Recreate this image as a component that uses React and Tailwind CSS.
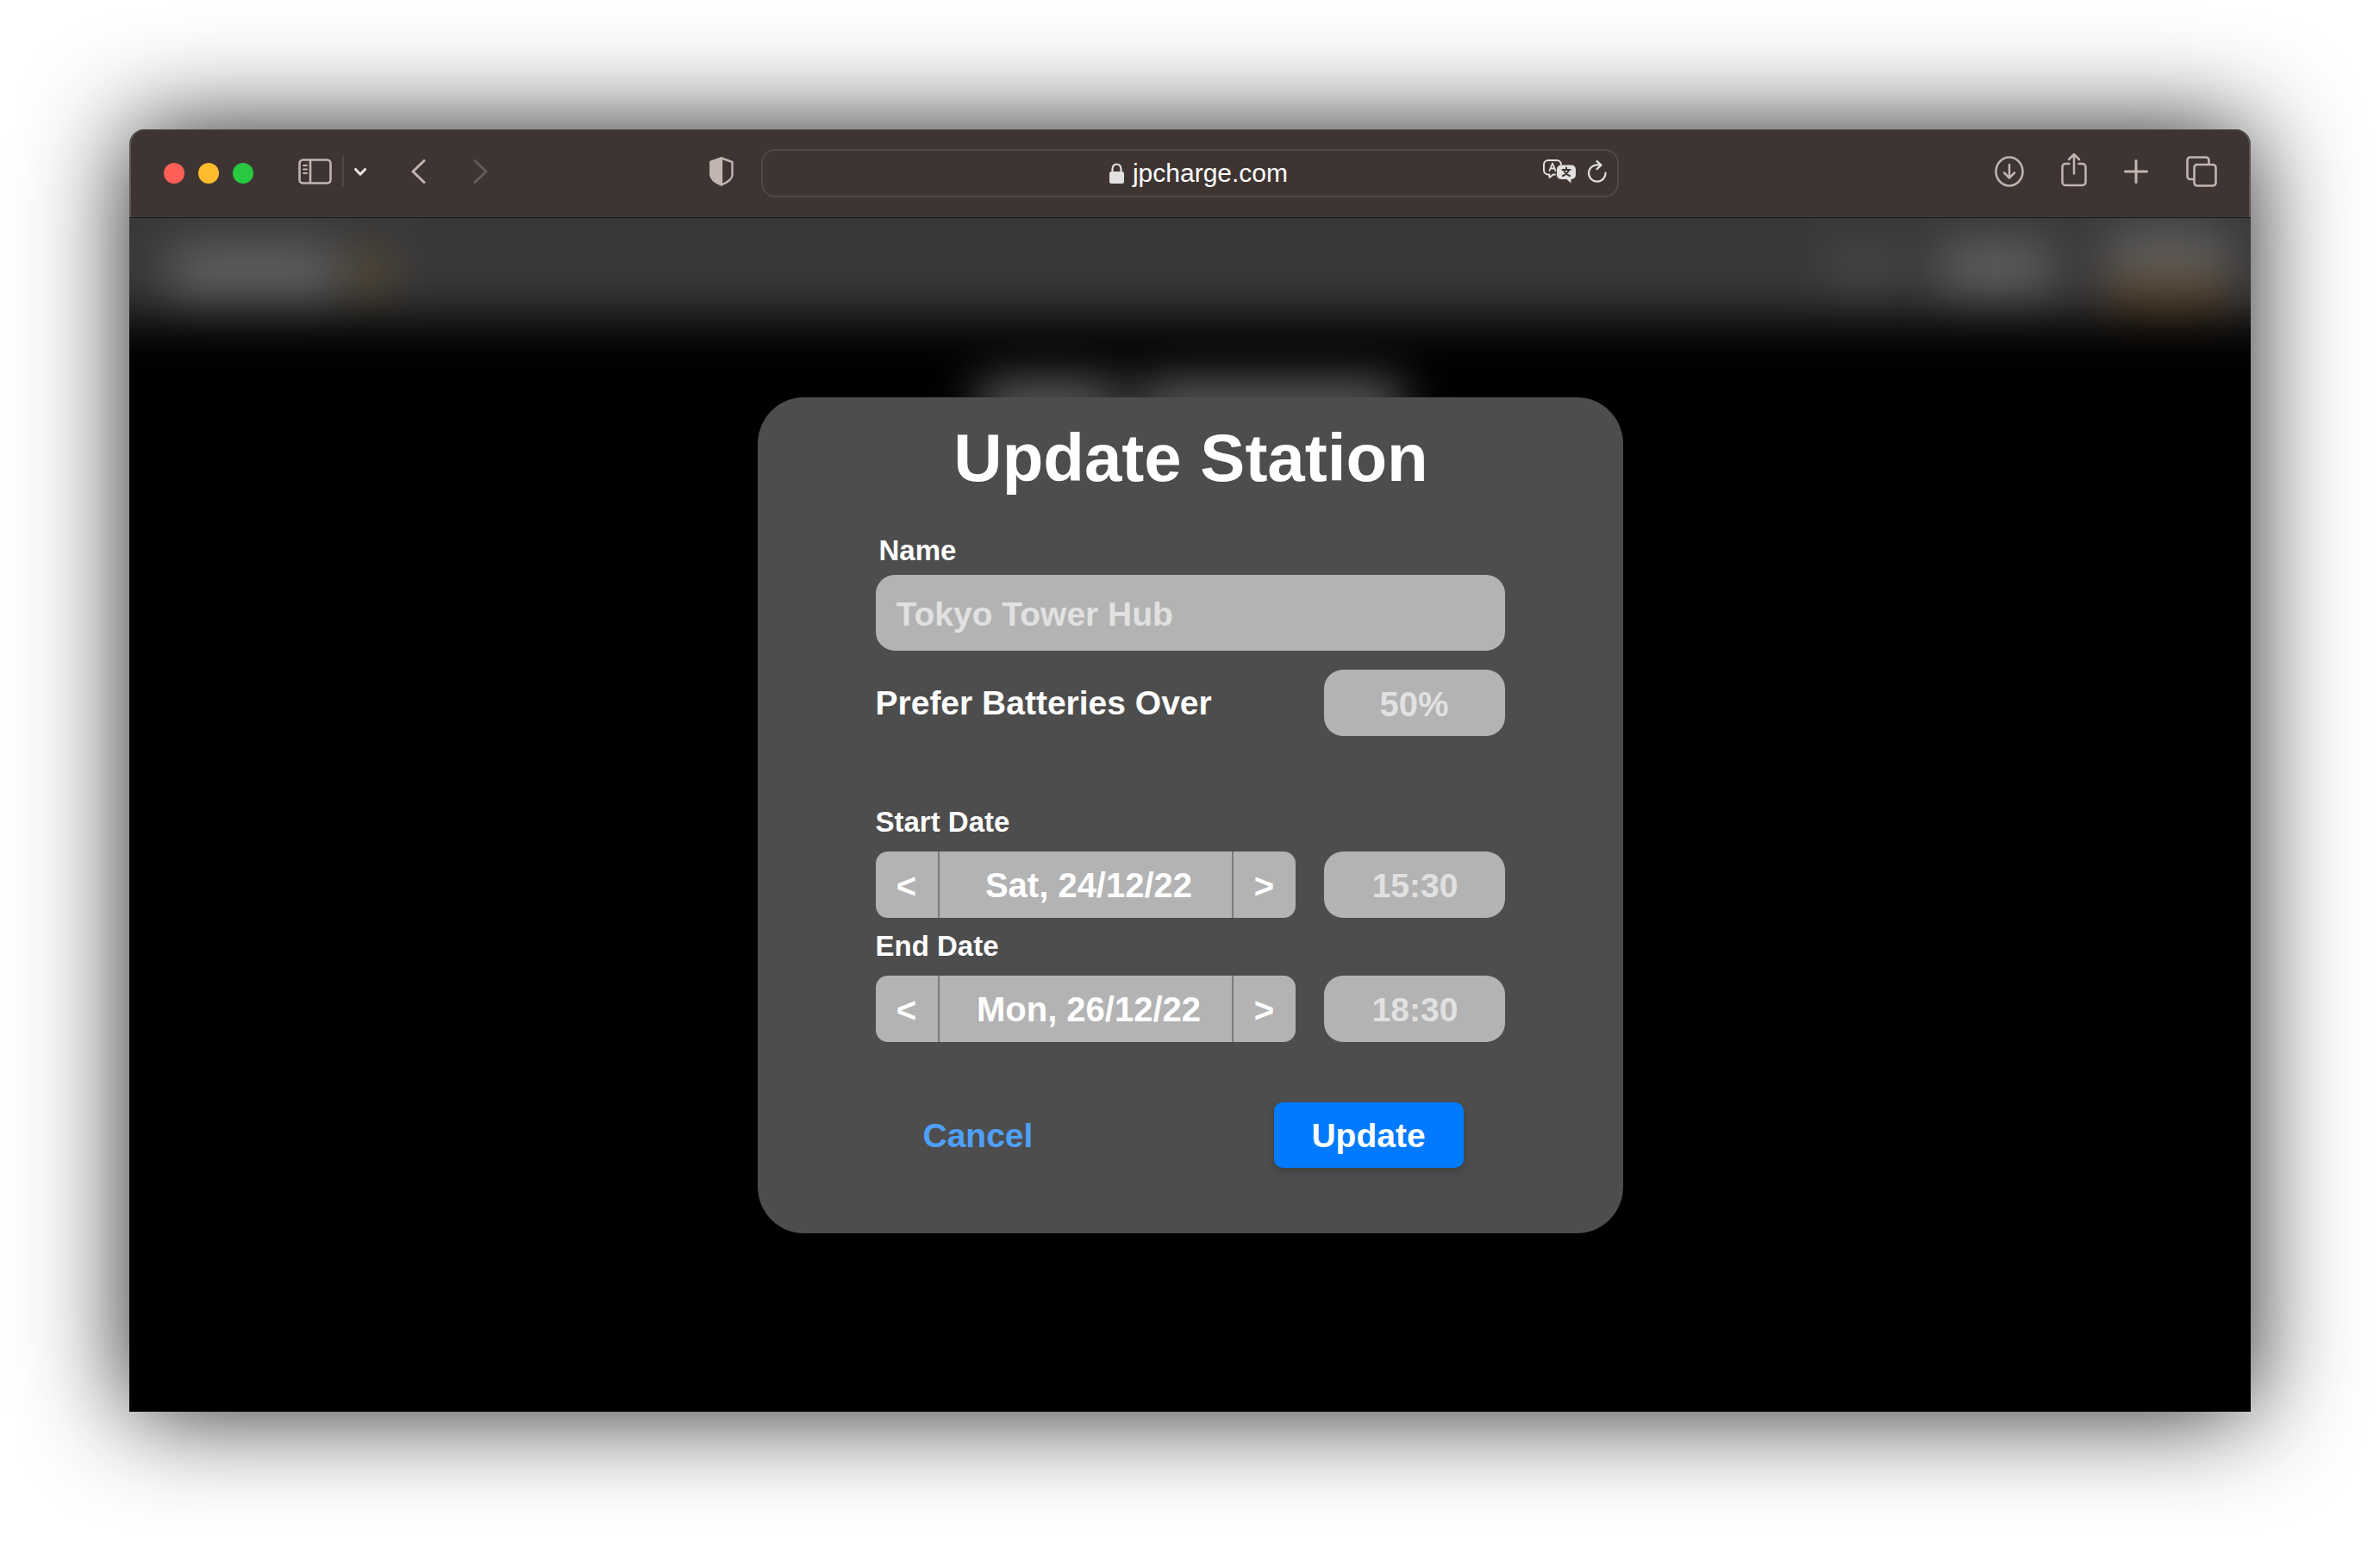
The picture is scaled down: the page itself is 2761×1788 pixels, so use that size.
import React from "react";

const stroke = {
  fill: "none",
  stroke: "currentColor",
  strokeLinecap: "round",
  strokeLinejoin: "round",
};

function IconButton({ label, className, children }) {
  return (
    <button type="button" aria-label={label} className={`shrink-0 ${className}`}>
      {children}
    </button>
  );
}

function Toolbar() {
  return (
    <header className="grid h-[103px] shrink-0 grid-cols-[1fr_995px_1fr] items-center rounded-t-[18px] border-b border-[#1c1c1e] bg-[#3e3533] text-[#c1b5b2] shadow-[inset_0_1px_0_#53504c,inset_2px_0_0_#5a5451,inset_-2px_0_0_#5a5451]">
      <div className="flex items-center pb-1 pl-10">
        <div className="flex gap-4 pt-1">
          <button type="button" aria-label="Close" className="size-6 rounded-full bg-[#ff5f57]" />
          <button type="button" aria-label="Minimise" className="size-6 rounded-full bg-[#febc2e]" />
          <button type="button" aria-label="Zoom" className="size-6 rounded-full bg-[#28c840]" />
        </div>
        <IconButton label="Sidebar" className="ml-[52px]">
          <svg width="39" height="30" viewBox="0 0 39 30" {...stroke} strokeWidth="2.600">
            <rect x="1.5" y="1.5" width="36" height="27" rx="4" />
            <path d="M14 2v26" />
            <path d="M6 8h4M6 12.500h4M6 17h4" strokeWidth="1.800" />
          </svg>
        </IconButton>
        <span className="ml-3 h-9 w-0.5 bg-[#514845]" />
        <IconButton label="Sidebar options" className="ml-3 text-[#ebe3e1]">
          <svg width="14" height="9" viewBox="0 0 14 9" {...stroke} strokeWidth="3">
            <path d="M1.500 1.500 7 7.200l5.500-5.700" />
          </svg>
        </IconButton>
        <IconButton label="Back" className="ml-[52px]">
          <svg width="17" height="28" viewBox="0 0 17 28" {...stroke} strokeWidth="3">
            <path d="M15 1.500 2 14l13 12.500" />
          </svg>
        </IconButton>
        <IconButton label="Forward" className="ml-[55px] text-[#655b58]">
          <svg width="17" height="28" viewBox="0 0 17 28" {...stroke} strokeWidth="3">
            <path d="M2 1.500 15 14 2 26.500" />
          </svg>
        </IconButton>
        <IconButton label="Privacy report" className="mr-8 ml-auto">
          <svg width="28" height="34" viewBox="0 0 28 34" {...stroke} strokeWidth="2.400">
            <path d="M14 1.500 26.500 6v15c0 4-5.500 8.500-12.500 11.500C7 29.500 1.500 25 1.500 21V6z" />
            <path d="M14 1.500V32.500C7 29.500 1.500 25 1.500 21V6z" fill="currentColor" />
          </svg>
        </IconButton>
      </div>

      <div className="flex h-14 items-center rounded-2xl border-2 border-[#504945] pr-3 pl-[106px] text-[#e2e0e0]">
        <div className="flex flex-1 items-center justify-center gap-2.5">
          <svg width="17" height="24" viewBox="0 0 17 24" aria-hidden="true">
            <rect x="0" y="10" width="17" height="14" rx="2.500" fill="currentColor" />
            <path d="M3.500 11V7a5 5.500 0 0 1 10 0v4" fill="none" stroke="currentColor" strokeWidth="2.200" />
          </svg>
          <span className="text-[30px] leading-9 text-white">jpcharge.com</span>
        </div>
        <IconButton label="Translate" className="mr-3.5 pb-1">
          <svg width="38" height="28" viewBox="0 0 38 28" {...stroke} strokeWidth="2">
            <path d="M14 17.500h-2L7.500 21v-3.500H6a5 5 0 0 1-5-5V6a5 5 0 0 1 5-5h10a5 5 0 0 1 5 4.500" />
            <path d="M7.500 13 11 4.500 14.500 13M8.700 10.500h4.600" strokeWidth="1.800" />
            <path
              d="M21 6.500h12a5 5 0 0 1 5 5v6.500a5 5 0 0 1-5 5h-0.500V27.500L27.500 23H21a5 5 0 0 1-5-5v-6.500a5 5 0 0 1 5-5z"
              fill="currentColor"
              stroke="none"
            />
            <path d="M27 9.500v2.500M22.500 12h9M24 12c1 3 3.500 5.500 7 7M30 12c-1 3-3.500 5.500-7 7" stroke="#3e3533" strokeWidth="2" />
          </svg>
        </IconButton>
        <IconButton label="Reload" className="pb-1">
          <svg width="22" height="26" viewBox="0 0 22 26" {...stroke} strokeWidth="2.200">
            <path d="M20.500 14.500A9.700 9.700 0 1 1 11 5.300h4" />
            <path d="M10.500 1.200 15.500 5.600l-5 4.600" />
          </svg>
        </IconButton>
      </div>

      <div className="flex items-center justify-end pr-[39px] pb-1">
        <IconButton label="Downloads" className="mr-[43px]">
          <svg width="34" height="36" viewBox="0 0 34 36" {...stroke} strokeWidth="2.500">
            <ellipse cx="17" cy="18" rx="15.500" ry="16.500" />
            <path d="M17 10v15.500M11 19.500l6 6 6-6" />
          </svg>
        </IconButton>
        <IconButton label="Share" className="mr-[43px] pb-1">
          <svg width="30" height="40" viewBox="0 0 30 40" {...stroke} strokeWidth="2.500">
            <path d="M9.500 13H5a3.500 3.500 0 0 0-3.500 3.500v18A3.500 3.500 0 0 0 5 38h20a3.500 3.500 0 0 0 3.500-3.500v-18A3.500 3.500 0 0 0 25 13h-4.500" />
            <path d="M15 24.500V2M9 8l6-6 6 6" />
          </svg>
        </IconButton>
        <IconButton label="New tab" className="mr-11">
          <svg width="28" height="28" viewBox="0 0 28 28" {...stroke} strokeWidth="3">
            <path d="M14 1.500v25M1.500 14h25" />
          </svg>
        </IconButton>
        <IconButton label="Tab overview" className="">
          <svg width="36" height="36" viewBox="0 0 36 36" {...stroke} strokeWidth="2.600">
            <rect x="9.500" y="10" width="25" height="24.500" rx="3.500" />
            <path d="M26.500 8.500V5A3.500 3.500 0 0 0 23 1.500H5A3.500 3.500 0 0 0 1.500 5v18.500A3.500 3.500 0 0 0 5 27h3" />
          </svg>
        </IconButton>
      </div>
    </header>
  );
}

function Backdrop() {
  return (
    <div aria-hidden="true" className="absolute inset-0 overflow-hidden bg-[#000002]">
      <div className="-mx-24 -mt-24 blur-[28px]">
        <div className="flex h-[212px] items-center justify-between bg-[#38383a] px-24 pt-24">
          <div className="flex items-center gap-4 pt-2 pl-12">
            <div className="h-14 w-48 bg-[#666666]" />
            <div className="h-14 w-12 bg-[#584a30]" />
          </div>
          <div className="flex items-center gap-12 pr-6">
            <div className="h-10 w-20 bg-[#4c4c4c]" />
            <div className="h-14 w-32 bg-[#646464]" />
            <div className="ml-4 w-36 pt-1">
              <div className="h-14 bg-[#606060]" />
              <div className="h-10 bg-[#5a4228]" />
            </div>
          </div>
        </div>
        <div className="flex h-[180px] items-center justify-center gap-6 pt-6">
          <div className="h-14 w-40 bg-[#686868]" />
          <div className="h-14 w-76 bg-[#686868]" />
        </div>
      </div>
    </div>
  );
}

function DateRow({ id, label, date, time }) {
  return (
    <div>
      <label htmlFor={id} className="block text-[33px] leading-9">
        {label}
      </label>
      <div className="mt-4 flex h-[77px] justify-between text-[40px]">
        <div className="flex w-[487px] divide-x-2 divide-[#7a7a7a] overflow-hidden rounded-[14px] bg-[#b3b3b3]">
          <button type="button" aria-label={`${label}: previous day`} className="w-[74px] pt-1">
            &lt;
          </button>
          <output className="flex flex-1 items-center justify-center pt-0.5 pl-2">{date}</output>
          <button type="button" aria-label={`${label}: next day`} className="w-[72px] pt-1">
            &gt;
          </button>
        </div>
        <input
          id={id}
          type="text"
          placeholder={time}
          className="w-[210px] rounded-[22px] bg-[#b3b3b3] pt-1 pl-0.5 text-center text-[39px] placeholder:text-[#e1e1e1]"
        />
      </div>
    </div>
  );
}

function UpdateStationDialog() {
  return (
    <form
      role="dialog"
      aria-labelledby="dialog-title"
      className="relative w-[1004px] rounded-[54px] bg-[#4d4d4d] px-[137px] pt-6 pb-[76px] font-bold text-white"
    >
      <h1 id="dialog-title" className="pl-0.5 text-center text-[78px] leading-[92px]">
        Update Station
      </h1>

      <label htmlFor="station-name" className="mt-11 block pl-1 text-[33px] leading-9">
        Name
      </label>
      <input
        id="station-name"
        type="text"
        placeholder="Tokyo Tower Hub"
        className="mt-2.5 block h-[88px] w-full rounded-[22px] bg-[#b3b3b3] px-6 pt-1 text-[39px] placeholder:text-[#e1e1e1]"
      />

      <div className="mt-[22px] flex h-[77px] items-center justify-between">
        <label htmlFor="battery-level" className="pt-0.5 text-[39px]">
          Prefer Batteries Over
        </label>
        <input
          id="battery-level"
          type="text"
          placeholder="50%"
          className="h-full w-[210px] rounded-[22px] bg-[#b3b3b3] pt-1 text-center text-[40px] placeholder:text-[#e1e1e1]"
        />
      </div>

      <div className="mt-[82px] flex flex-col gap-[15px]">
        <DateRow id="start-time" label="Start Date" date="Sat, 24/12/22" time="15:30" />
        <DateRow id="end-time" label="End Date" date="Mon, 26/12/22" time="18:30" />
      </div>

      <div className="mt-[70px] flex h-[76px] items-center justify-between pr-12 pl-[55px] text-[39px]">
        <button type="button" className="pt-1 text-[#4fa0fb]">
          Cancel
        </button>
        <button type="submit" className="h-full w-[220px] rounded-[10px] bg-[#007aff] pt-1 shadow-[0_4px_8px_rgba(0,0,0,0.2)]">
          Update
        </button>
      </div>
    </form>
  );
}

export default function App() {
  return (
    <div className="flex min-h-screen overflow-hidden bg-white p-[150px] font-['Liberation_Sans',Arial,sans-serif]">
      <div className="flex flex-1 flex-col rounded-t-[18px] shadow-[0_0_120px_rgba(0,0,0,0.88)]">
        <Toolbar />
        <main className="relative flex flex-1 items-center justify-center">
          <Backdrop />
          <UpdateStationDialog />
        </main>
      </div>
    </div>
  );
}
